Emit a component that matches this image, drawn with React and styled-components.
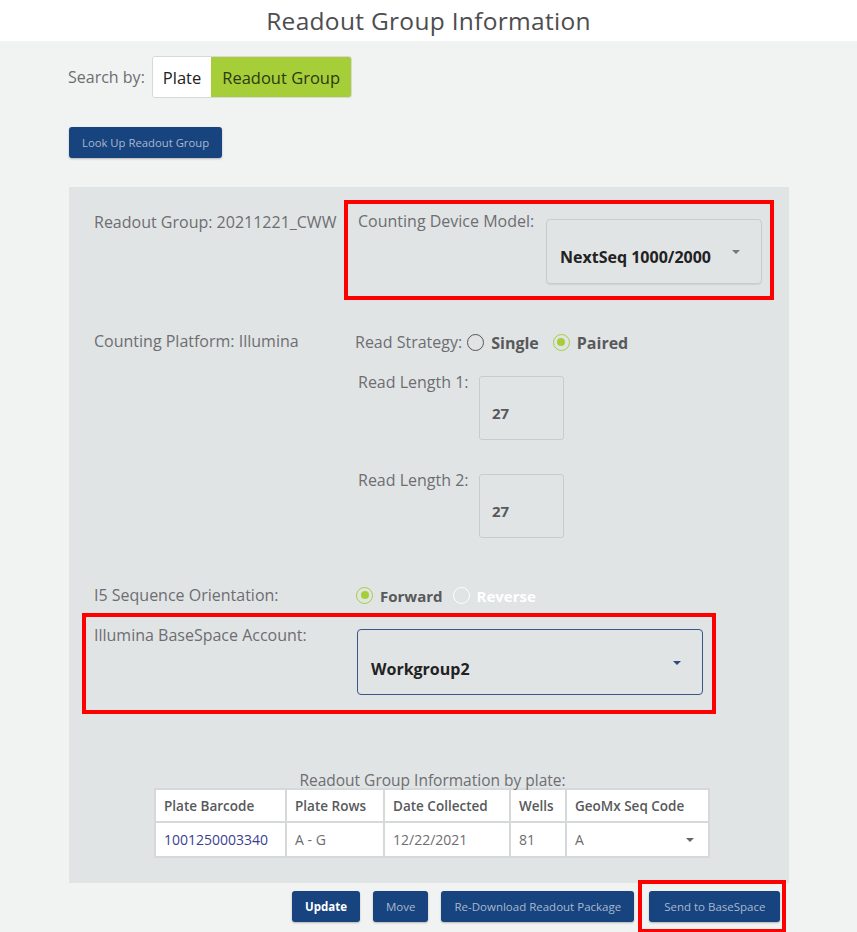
import React from "react";
import styled, { createGlobalStyle } from "styled-components";

const Global = createGlobalStyle`
  html, body {
    margin: 0;
    padding: 0;
    background: #f1f2f2;
    font-family: "Open Sans", "Liberation Sans", sans-serif;
  }
`;

const Header = styled.div`
  height: 41px;
  background: #fff;
  display: flex;
  align-items: center;
  justify-content: center;
`;
const Title = styled.h1`
  margin: 0;
  font-size: 24.5px;
  font-weight: 400;
  color: #4d4d4f;
  letter-spacing: 0.3px;
`;
const Page = styled.div`
  padding: 15px 0 0 69px;
`;
const SearchRow = styled.div`
  display: flex;
  align-items: center;
  gap: 7px;
  color: #6d6e71;
  font-size: 16px;
  margin-left: -1px;
`;
const Toggle = styled.div`
  display: flex;
  height: 40px;
  border: 1px solid #d8d8d8;
  border-radius: 3px;
  overflow: hidden;
`;
const ToggleBtn = styled.div`
  display: flex;
  align-items: center;
  padding: 0 ${(p) => (p.$active ? "11px" : "10px")};
  font-size: 16.5px;
  color: ${(p) => (p.$active ? "#2b3a10" : "#222")};
  background: ${(p) => (p.$active ? "#a6ce39" : "#fff")};
`;
const Btn = styled.button`
  height: 31px;
  padding: 0 ${(p) => p.$pad || 13}px;
  border: none;
  border-radius: 3px;
  background: #17437e;
  color: ${(p) => (p.$bright ? "#fff" : "#a9b9cf")};
  font-family: "Open Sans", "Liberation Sans", sans-serif;
  font-size: ${(p) => p.$size || 11}px;
  font-weight: ${(p) => (p.$bright ? 700 : 400)};
  box-shadow: 0 1px 2px rgba(0, 0, 0, 0.25);
`;
const LookUp = styled.div`
  margin-top: 29px;
`;
const Panel = styled.div`
  margin-top: 29px;
  width: 720px;
  background: #e1e4e5;
  padding: 13px 0 25px 0;
`;
const Row = styled.div`
  display: flex;
  align-items: flex-start;
  margin-top: ${(p) => p.$top || 0}px;
`;
const Label = styled.div`
  box-sizing: border-box;
  color: #6d6e71;
  font-size: 16px;
  width: ${(p) => (p.$w ? p.$w + "px" : "auto")};
  padding-left: ${(p) => p.$pl || 0}px;
  padding-top: ${(p) => p.$pt || 0}px;
  flex-shrink: 0;
  white-space: nowrap;
`;
const RedBox = styled.div`
  border: 4px solid #ff0000;
  width: ${(p) => p.$w}px;
  height: ${(p) => p.$h}px;
  margin-left: ${(p) => p.$ml || 0}px;
  margin-top: ${(p) => p.$mt || 0}px;
  box-sizing: border-box;
  display: flex;
  align-items: flex-start;
  padding: ${(p) => p.$pad || "0"};
`;
const Select = styled.div`
  box-sizing: border-box;
  width: ${(p) => p.$w}px;
  height: ${(p) => p.$h}px;
  margin-top: ${(p) => p.$mt || 0}px;
  border: 1px solid ${(p) => (p.$dark ? "#3a5589" : "#c9cccd")};
  border-radius: 4px;
  box-shadow: ${(p) => (p.$dark ? "none" : "0 1px 1px rgba(0,0,0,0.08)")};
  display: flex;
  align-items: center;
  justify-content: space-between;
  padding: ${(p) => p.$pt || 10}px 21px 0 13px;
  font-weight: 700;
  font-size: 16px;
  color: #222;
`;
const Caret = styled.span`
  width: 0;
  height: 0;
  border-left: 4px solid transparent;
  border-right: 4px solid transparent;
  border-top: 4px solid ${(p) => p.$color || "#777"};
  margin-bottom: ${(p) => p.$mb || 0}px;
`;
const RightCol = styled.div`
  display: flex;
  flex-direction: column;
`;
const RadioGroup = styled.div`
  display: flex;
  align-items: center;
`;
const Radio = styled.span`
  box-sizing: border-box;
  width: 17px;
  height: 17px;
  border-radius: 50%;
  border: 1.5px solid ${(p) => (p.$checked ? "#a6ce39" : p.$white ? "#fff" : "#555")};
  background: ${(p) => (p.$white ? "transparent" : "#e1e4e5")};
  display: inline-flex;
  align-items: center;
  justify-content: center;
  margin: ${(p) => p.$m || "0 7px 0 0"};
  &::after {
    content: "";
    width: 8px;
    height: 8px;
    border-radius: 50%;
    background: ${(p) => (p.$checked ? "#a6ce39" : "transparent")};
  }
`;
const RadioText = styled.span`
  font-weight: 700;
  font-size: ${(p) => p.$size || 15}px;
  color: ${(p) => (p.$white ? "#fff" : "#58595b")};
  margin-right: ${(p) => p.$mr || 0}px;
  padding-top: 2px;
`;
const LenRow = styled.div`
  display: flex;
  align-items: flex-start;
  margin-top: ${(p) => p.$top}px;
`;
const LenBox = styled.div`
  box-sizing: border-box;
  width: 85px;
  height: 64px;
  margin-top: 5px;
  border: 1px solid #c9cccd;
  border-radius: 3px;
  display: flex;
  align-items: center;
  padding: 10px 0 0 12px;
  font-weight: 700;
  font-size: 15px;
  color: #58595b;
`;
const Caption = styled.div`
  text-align: center;
  color: #6d6e71;
  font-size: 15.5px;
  line-height: 16px;
  margin: 58px 0 0 7px;
`;
const Table = styled.table`
  margin: 0 0 0 85px;
  border-collapse: separate;
  border-spacing: 2px;
  background: #d6d9da;
  font-size: 14px;
`;
const Th = styled.th`
  background: #fff;
  text-align: left;
  font-weight: 600;
  font-size: 13.5px;
  color: #58595b;
  height: 31px;
  padding: 0 8px;
  width: ${(p) => p.$w}px;
  box-sizing: border-box;
`;
const Td = styled.td`
  background: #fff;
  color: ${(p) => (p.$link ? "#3a3f8f" : "#6d6e71")};
  height: 33px;
  padding: 0 8px;
`;
const CellSelect = styled.div`
  display: flex;
  align-items: center;
  justify-content: space-between;
  padding-right: 6px;
`;
const Footer = styled.div`
  display: flex;
  align-items: flex-start;
  padding: 8px 0 0 223px;
  gap: 13px;
`;
const RedWrap = styled.div`
  border: 4px solid #ff0000;
  padding: 7px 2px 7px 7px;
  margin: -11px 0 0 -9px;
`;

export default function App() {
  return (
    <>
      <Global />
      <Header>
        <Title>Readout Group Information</Title>
      </Header>
      <Page>
        <SearchRow>
          <span>Search by:</span>
          <Toggle>
            <ToggleBtn>Plate</ToggleBtn>
            <ToggleBtn $active>Readout Group</ToggleBtn>
          </Toggle>
        </SearchRow>
        <LookUp>
          <Btn $size={11.3}>Look Up Readout Group</Btn>
        </LookUp>
        <Panel>
          <Row>
            <Label $w={275} $pl={25} $pt={11}>Readout Group: 20211221_CWW</Label>
            <RedBox $w={430} $h={100} $pad="6px 0 0 10px">
              <Label $w={188} $pt={0}>Counting Device Model:</Label>
              <Select $w={216} $h={65} $mt={9}>
                NextSeq 1000/2000
                <Caret $mb={10} />
              </Select>
            </RedBox>
          </Row>
          <Row $top={30}>
            <Label $w={286} $pl={25}>Counting Platform: Illumina</Label>
            <RightCol>
              <RadioGroup>
                <Label>Read Strategy:</Label>
                <Radio $m="0 7px 0 5px" />
                <RadioText $size={16} $mr={14}>Single</RadioText>
                <Radio $checked />
                <RadioText $size={16}>Paired</RadioText>
              </RadioGroup>
              <LenRow $top={17}>
                <Label $w={124} $pl={3}>Read Length 1:</Label>
                <LenBox>27</LenBox>
              </LenRow>
              <LenRow $top={29}>
                <Label $w={124} $pl={3}>Read Length 2:</Label>
                <LenBox>27</LenBox>
              </LenRow>
            </RightCol>
          </Row>
          <Row $top={46}>
            <Label $w={287} $pl={25}>I5 Sequence Orientation:</Label>
            <RadioGroup>
              <Radio $checked />
              <RadioText $mr={10}>Forward</RadioText>
              <Radio $white />
              <RadioText $white>Reverse</RadioText>
            </RadioGroup>
          </Row>
          <RedBox $w={634} $h={101} $ml={13} $mt={7} $pad="7px 0 0 8px">
            <Label $w={263}>Illumina BaseSpace Account:</Label>
            <Select $w={346} $h={66} $mt={5} $pt={13} $dark>
              Workgroup2
              <Caret $color="#2e4a7a" $mb={12} />
            </Select>
          </RedBox>
          <Caption>Readout Group Information by plate:</Caption>
          <Table>
            <thead>
              <tr>
                <Th $w={129}>Plate Barcode</Th>
                <Th $w={96}>Plate Rows</Th>
                <Th $w={124}>Date Collected</Th>
                <Th $w={54}>Wells</Th>
                <Th $w={141}>GeoMx Seq Code</Th>
              </tr>
            </thead>
            <tbody>
              <tr>
                <Td $link>1001250003340</Td>
                <Td>A - G</Td>
                <Td>12/22/2021</Td>
                <Td>81</Td>
                <Td>
                  <CellSelect>
                    A
                    <Caret $color="#666" />
                  </CellSelect>
                </Td>
              </tr>
            </tbody>
          </Table>
        </Panel>
        <Footer>
          <Btn $bright $size={11.5}>Update</Btn>
          <Btn $size={11.5}>Move</Btn>
          <Btn $size={11.5}>Re-Download Readout Package</Btn>
          <RedWrap>
            <Btn $size={11.5} $pad={15}>Send to BaseSpace</Btn>
          </RedWrap>
        </Footer>
      </Page>
    </>
  );
}
